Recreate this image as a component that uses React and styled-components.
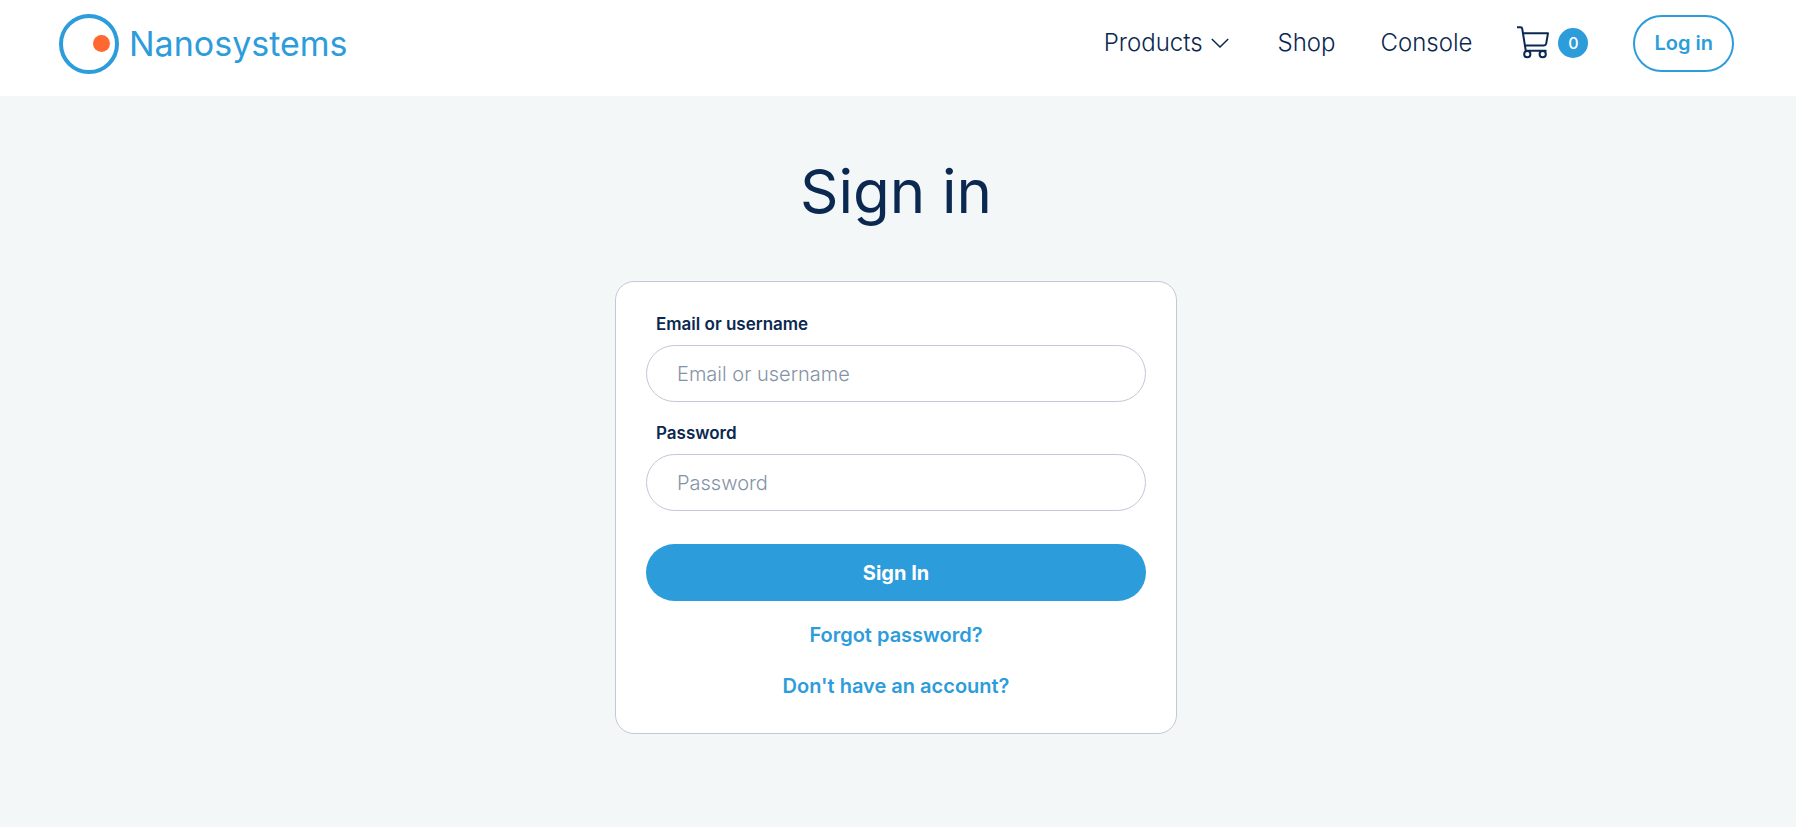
import React from "react";
import styled, { createGlobalStyle } from "styled-components";

const blue = "#2d9cdb";
const navy = "#0b2850";

const GlobalStyle = createGlobalStyle`
  *, *::before, *::after { box-sizing: border-box; }
  body {
    margin: 0;
    background: #f3f7f8;
    color: ${navy};
    font-family: "Inter", "Liberation Sans", sans-serif;
  }
  button, input { font: inherit; }
  a { text-decoration: none; }
`;

const Page = styled.div`
  min-height: 100vh;
`;

const Header = styled.header`
  display: flex;
  align-items: flex-start;
  justify-content: space-between;
  height: 96px;
  padding: 14px 62px 0 59px;
  background: #fff;
`;

const Brand = styled.a`
  display: flex;
  align-items: center;
  gap: 10px;
  height: 60px;
  color: ${blue};
  font-size: 34px;
  line-height: 42px;
`;

const Nav = styled.nav`
  display: flex;
  align-items: center;
  gap: 45px;
  height: 58px;
`;

const navText = `
  color: ${navy};
  font-size: 24px;
  font-weight: 300;
  line-height: 28px;
`;

const NavLink = styled.a`
  ${navText}
`;

const NavMenu = styled.button`
  ${navText}
  display: flex;
  align-items: center;
  gap: 8px;
  padding: 0 4px 0 0;
  border: 0;
  background: none;
`;

const CartLink = styled.a`
  display: flex;
  align-items: center;
  gap: 8px;
  color: ${navy};
`;

const CartCount = styled.span`
  display: grid;
  place-items: center;
  width: 30px;
  height: 30px;
  border-radius: 50%;
  background: ${blue};
  color: #fff;
  font-size: 16px;
  font-weight: 500;
`;

const LoginButton = styled.button`
  height: 57px;
  padding: 0 19px;
  border: 2px solid ${blue};
  border-radius: 29px;
  background: #fff;
  color: ${blue};
  font-size: 20px;
  font-weight: 600;
`;

const Main = styled.main`
  display: flex;
  flex-direction: column;
  align-items: center;
  padding: 55px 4px 40px 0;
`;

const Title = styled.h1`
  margin: 0 0 50px;
  font-size: 60px;
  font-weight: 400;
  line-height: 80px;
`;

const Card = styled.form`
  display: flex;
  flex-direction: column;
  width: 100%;
  max-width: 562px;
  padding: 30px 30px 33px;
  border: 1px solid #c3c8d6;
  border-radius: 19px;
  background: #fff;
`;

const Field = styled.div`
  display: flex;
  flex-direction: column;
  gap: 8px;
  margin-bottom: 19px;
`;

const Label = styled.label`
  padding-left: 10px;
  font-size: 17px;
  font-weight: 600;
  line-height: 25px;
`;

const Input = styled.input`
  width: 100%;
  height: 57px;
  padding: 0 30px;
  border: 1px solid #c3c8d6;
  border-radius: 29px;
  background: #fff;
  color: ${navy};
  font-size: 20px;
  font-weight: 300;
  &::placeholder {
    color: #8593a7;
    opacity: 1;
  }
`;

const SubmitButton = styled.button`
  height: 57px;
  margin-top: 14px;
  border: 0;
  border-radius: 29px;
  background: ${blue};
  color: #fff;
  font-size: 20px;
  font-weight: 700;
`;

const Links = styled.div`
  display: flex;
  flex-direction: column;
  align-items: center;
  gap: 23px;
  padding-top: 20px;
`;

const TextLink = styled.a`
  color: ${blue};
  font-size: 20px;
  font-weight: 600;
  line-height: 28px;
`;

const Logo = () => (
  <svg width="60" height="60" viewBox="0 0 60 60" aria-hidden="true">
    <circle cx="30" cy="30" r="28" fill="none" stroke={blue} strokeWidth="4" />
    <circle cx="42.5" cy="29.5" r="8.5" fill="#ff6830" />
  </svg>
);

const Chevron = () => (
  <svg width="18" height="10" viewBox="0 0 18 10" fill="none" stroke="currentColor" strokeWidth="1.5" aria-hidden="true">
    <path d="M0.8 1L9 9L17.2 1" />
  </svg>
);

const Cart = () => (
  <svg width="33" height="34" viewBox="0 0 33 34" fill="none" stroke="currentColor" strokeWidth="2" strokeLinejoin="round" aria-hidden="true">
    <path d="M0 1.2H3.6Q5 1.2 5.2 2.6L8.8 24.8H29.5M6 7.2H31L29.2 17.6Q28.8 19.4 27 19.4H8" />
    <circle cx="10.3" cy="28.2" r="3.1" />
    <circle cx="25.7" cy="28.2" r="3.1" />
  </svg>
);

export default function App() {
  return (
    <Page>
      <GlobalStyle />
      <Header>
        <Brand href="#">
          <Logo />
          Nanosystems
        </Brand>
        <Nav>
          <NavMenu type="button">
            Products
            <Chevron />
          </NavMenu>
          <NavLink href="#shop">Shop</NavLink>
          <NavLink href="#console">Console</NavLink>
          <CartLink href="#cart" aria-label="Cart">
            <Cart />
            <CartCount>0</CartCount>
          </CartLink>
          <LoginButton type="button">Log in</LoginButton>
        </Nav>
      </Header>
      <Main>
        <Title>Sign in</Title>
        <Card onSubmit={(e) => e.preventDefault()}>
          <Field>
            <Label htmlFor="user">Email or username</Label>
            <Input id="user" type="text" placeholder="Email or username" />
          </Field>
          <Field>
            <Label htmlFor="password">Password</Label>
            <Input id="password" type="password" placeholder="Password" />
          </Field>
          <SubmitButton type="submit">Sign In</SubmitButton>
          <Links>
            <TextLink href="#forgot">Forgot password?</TextLink>
            <TextLink href="#register">Don't have an account?</TextLink>
          </Links>
        </Card>
      </Main>
    </Page>
  );
}
